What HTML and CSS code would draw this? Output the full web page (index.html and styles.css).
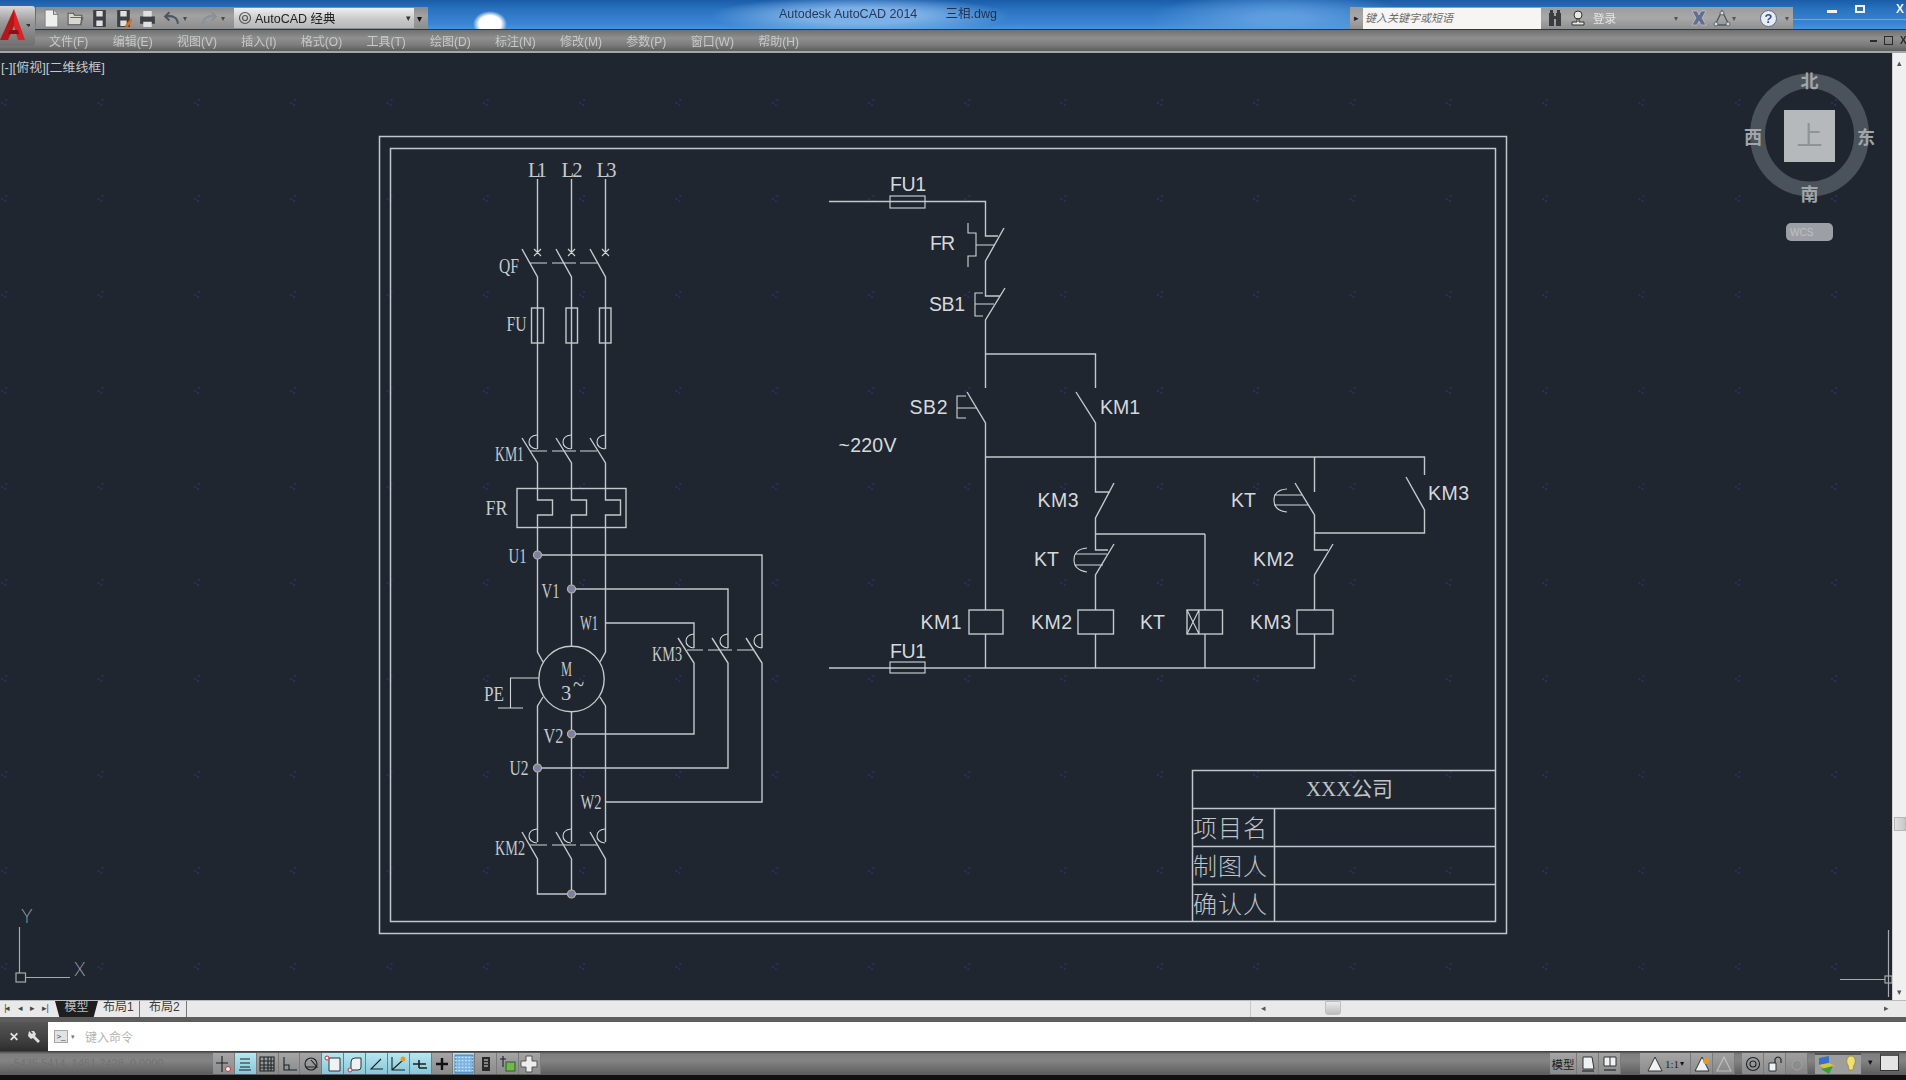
FILE: index.html
```html
<!DOCTYPE html>
<html lang="zh">
<head>
<meta charset="utf-8">
<title>Autodesk AutoCAD 2014 三相.dwg</title>
<link rel="stylesheet" href="styles.css">
</head>
<body>
<div class="app">
  <header class="titlebar">
    <div class="appbtn">
      <svg class="logo" viewBox="0 0 30 34" width="30" height="34">
        <path class="logo-l" d="M14 1L0 32H8L14 18Z"/>
        <path class="logo-r" d="M14 1L25 32H18L14 18Z"/>
        <path class="logo-b" d="M8 26H19L18 22H10Z"/>
        <path class="arrow-d" d="M26 16h5l-2.5 3z"/>
      </svg>
    </div>
    <div class="qat">
      <svg class="qi" viewBox="0 0 16 18"><path class="i-page" d="M2 1h8l4 4v12H2z"/><path class="i-fold" d="M10 1v4h4"/></svg>
      <svg class="qi" viewBox="0 0 16 18"><path class="i-page2" d="M1 15V4h5l1 2h7l-1 9z"/><path class="i-fold" d="M3 8h12l-2 7"/></svg>
      <svg class="qi" viewBox="0 0 16 18"><path class="i-disk" d="M2 1h12v16H2z"/><path class="i-label" d="M5 2h6v5H5zM5 11h6v5H5z"/></svg>
      <svg class="qi" viewBox="0 0 16 18"><path class="i-disk" d="M2 1h12v16H2z"/><path class="i-label" d="M5 2h6v5H5zM5 11h6v5H5z"/><path class="i-pencil" d="M9 16l6-7 2 2-6 7z"/></svg>
      <svg class="qi" viewBox="0 0 16 18"><path class="i-disk" d="M1 7h14v7H1z"/><path class="i-label" d="M4 2h8v5H4zM4 12h8v5H4z"/></svg>
      <svg class="qi" viewBox="0 0 16 18"><path class="i-undo" d="M14 14C14 8 9 6 3 7M6 3L2 7l4 4"/></svg>
      <span class="qa">▾</span>
      <svg class="qi qi-off" viewBox="0 0 16 18"><path class="i-redo" d="M2 14C2 8 7 6 13 7M10 3l4 4-4 4"/></svg>
      <span class="qa">▾</span>
      <div class="wsp">
        <svg class="gear" viewBox="0 0 16 16" width="16" height="16"><circle class="i-gear" cx="8" cy="8" r="5.5"/><circle class="i-gear" cx="8" cy="8" r="2.5"/></svg>
        <span class="wsp-t">AutoCAD 经典</span>
        <span class="wsp-a">▾</span>
      </div>
      <span class="qat-more">▾</span>
    </div>
    <div class="doc">
      <span class="doc-a">Autodesk AutoCAD 2014</span>
      <span class="doc-b">三相.dwg</span>
    </div>
    <div class="search">
      <span class="s-arrow">▸</span>
      <div class="s-input">键入关键字或短语</div>
      <svg class="s-ic" viewBox="0 0 16 18" width="16" height="18"><path class="i-bin" d="M2 4h5v13H2zM9 4h5v13H9zM3 1h3v3H3zM10 1h3v3h-3zM7 7h2v3H7z"/></svg>
      <svg class="s-ic s-user" viewBox="0 0 16 18" width="16" height="18"><circle class="i-user" cx="8" cy="6" r="4"/><path class="i-user" d="M7 10h2v3h5v3H2v-3h5z"/></svg>
      <span class="s-login">登录</span>
      <span class="s-a s-a1">▾</span>
      <svg class="s-ic s-x" viewBox="0 0 18 18" width="18" height="18"><path class="i-x" d="M2 2h5l2 4 2-4h5l-4 7 4 7h-5l-2-4-2 4H2l4-7z"/></svg>
      <svg class="s-ic s-tri" viewBox="0 0 18 18" width="18" height="18"><path class="i-tri" d="M9 2L16 16H2Z"/><circle class="i-tri2" cx="9" cy="4" r="2"/><circle class="i-tri2" cx="3" cy="15" r="2"/><circle class="i-tri2" cx="15" cy="15" r="2"/></svg>
      <span class="s-a s-a2">▾</span>
      <span class="s-help">?</span>
      <span class="s-a s-a3">▾</span>
    </div>
    <div class="winbtns">
      <span class="w-min"></span>
      <span class="w-max"></span>
      <span class="w-x">X</span>
    </div>
  </header>

  <nav class="menubar">
    <span class="mi">文件(F)</span>
    <span class="mi">编辑(E)</span>
    <span class="mi">视图(V)</span>
    <span class="mi">插入(I)</span>
    <span class="mi">格式(O)</span>
    <span class="mi">工具(T)</span>
    <span class="mi">绘图(D)</span>
    <span class="mi">标注(N)</span>
    <span class="mi">修改(M)</span>
    <span class="mi">参数(P)</span>
    <span class="mi">窗口(W)</span>
    <span class="mi">帮助(H)</span>
    <div class="mdi">
      <span class="m-min"></span>
      <span class="m-rest"></span>
      <span class="m-x">X</span>
    </div>
  </nav>

  <main class="workspace">
    <svg class="canvas" viewBox="0 53 1892 947" width="1892" height="947">
      <defs>
        <pattern id="grid" patternUnits="userSpaceOnUse" x="867" y="195" width="96.3" height="96">
          <rect class="speck" x="1" y="3" width="2" height="2"/>
          <rect class="speck" x="5" y="0" width="2" height="2"/>
          <rect class="speck" x="4" y="5" width="2" height="2"/>
        </pattern>
      </defs>
      <rect class="gridfill" x="0" y="53" width="1892" height="947"/>

      <text class="vp" x="1" y="72" textLength="104" lengthAdjust="spacingAndGlyphs">[-][俯视][二维线框]</text>

      <!-- sheet frames -->
      <rect class="frame" x="379.5" y="136.5" width="1127" height="797"/>
      <rect class="frame" x="390.5" y="148.5" width="1105" height="773"/>

      <!-- title block -->
      <path class="frame" d="M1192.5 922V770.5H1496M1192.5 808.5H1496M1192.5 846.5H1496M1192.5 884.5H1496M1274.5 808.5V922"/>
      <text class="cjk cjk-m" x="1306" y="796" textLength="87" lengthAdjust="spacingAndGlyphs">XXX公司</text>
      <text class="cjk" x="1193" y="837" textLength="74">项目名</text>
      <text class="cjk" x="1193" y="875" textLength="74">制图人</text>
      <text class="cjk" x="1193" y="913" textLength="74">确认人</text>

      <!-- motor circuit -->
      <path class="wire" d="M537.5 179V252M571.5 179V252M605.5 179V252"/>
      <path class="thin" d="M534 249l7 7M541 249l-7 7M568 249l7 7M575 249l-7 7M602 249l7 7M609 249l-7 7"/>
      <path class="wire" d="M522 249L537.5 277V449M556 249L571.5 277V449M590 249L605.5 277V449"/>
      <path class="thin" d="M530 263H547M552 263H576M580 263H597"/>
      <rect class="wire" x="531.5" y="308" width="12" height="35"/>
      <rect class="wire" x="566" y="308" width="11.5" height="35"/>
      <rect class="wire" x="599.5" y="308" width="11.5" height="35"/>

      <path class="thin" d="M537 435Q529 436 529 442Q529 448 537 449M571 435Q563 436 563 442Q563 448 571 449M605 435Q597 436 597 442Q597 448 605 449"/>
      <path class="thin" d="M530 451H547M552 451H576M580 451H597"/>
      <path class="wire" d="M522 438L537.5 463V500H552.5V515H537.5V652L543 662"/>
      <path class="wire" d="M556 438L571.5 463V500H586.5V515H571.5V646"/>
      <path class="wire" d="M590 438L605.5 463V500H620.5V515H605.5V652L600 662"/>
      <rect class="wire" x="517" y="488.5" width="109" height="39"/>

      <circle class="wire" cx="571.5" cy="679" r="32.7"/>
      <path class="wire" d="M537.5 555H762V648M571.5 589H728V648M605.5 623H694V648"/>
      <path class="thin" d="M694 634Q686 635 686 641Q686 647 694 648M728 634Q720 635 720 641Q720 647 728 648M762 634Q754 635 754 641Q754 647 762 648"/>
      <path class="thin" d="M687 650H703M708 650H732M737 650H754"/>
      <path class="wire" d="M678 638L694 663V734H571.5M712 638L728 663V768H537.5M746 638L762 663V802H605.5"/>
      <path class="thin" d="M538.5 678H510.5V708M498 708H523"/>
      <path class="wire" d="M543 697L537.5 706V842M571.5 712V842M600 697L605.5 706V842"/>
      <path class="thin" d="M537 829Q529 830 529 836Q529 842 537 843M571 829Q563 830 563 836Q563 842 571 843M605 829Q597 830 597 836Q597 842 605 843"/>
      <path class="thin" d="M530 845H547M552 845H576M580 845H597"/>
      <path class="wire" d="M522 832L537.5 859V894H605.5V859L590 832M556 832L571.5 859V894"/>
      <circle class="node" cx="537.5" cy="555" r="4"/>
      <circle class="node" cx="571.5" cy="589" r="4"/>
      <circle class="node" cx="571.5" cy="734" r="4"/>
      <circle class="node" cx="537.5" cy="768" r="4"/>
      <circle class="node" cx="571.5" cy="894" r="4"/>

      <text class="ser" x="528" y="177" textLength="19">L1</text>
      <text class="ser" x="561.5" y="177" textLength="21">L2</text>
      <text class="ser" x="596.5" y="177" textLength="20">L3</text>
      <text class="ser" x="499" y="273" textLength="20" lengthAdjust="spacingAndGlyphs">QF</text>
      <text class="ser" x="506.5" y="331" textLength="20" lengthAdjust="spacingAndGlyphs">FU</text>
      <text class="ser" x="495" y="461" textLength="29" lengthAdjust="spacingAndGlyphs">KM1</text>
      <text class="ser" x="485.5" y="515" textLength="22" lengthAdjust="spacingAndGlyphs">FR</text>
      <text class="ser" x="508.5" y="563" textLength="18" lengthAdjust="spacingAndGlyphs">U1</text>
      <text class="ser" x="541.5" y="598" textLength="18" lengthAdjust="spacingAndGlyphs">V1</text>
      <text class="ser" x="580" y="630" textLength="18" lengthAdjust="spacingAndGlyphs">W1</text>
      <text class="ser" x="652" y="661" textLength="30" lengthAdjust="spacingAndGlyphs">KM3</text>
      <text class="ser" x="561" y="676" textLength="11" lengthAdjust="spacingAndGlyphs">M</text>
      <text class="ser" x="561" y="700">3</text>
      <text class="ser" x="573" y="691">~</text>
      <text class="ser" x="484" y="701" textLength="20" lengthAdjust="spacingAndGlyphs">PE</text>
      <text class="ser" x="543.5" y="743" textLength="20" lengthAdjust="spacingAndGlyphs">V2</text>
      <text class="ser" x="509.5" y="775" textLength="19" lengthAdjust="spacingAndGlyphs">U2</text>
      <text class="ser" x="580.5" y="809" textLength="21" lengthAdjust="spacingAndGlyphs">W2</text>
      <text class="ser" x="495" y="855" textLength="30" lengthAdjust="spacingAndGlyphs">KM2</text>

      <!-- control circuit -->
      <path class="wire" d="M829 201.5H985.5V236H998M1004 228L985.5 261V296H1000M1005 288L985.5 320V388"/>
      <rect class="thin" x="890" y="196" width="35" height="12"/>
      <path class="thin" d="M968 223V233H976V256H968V267M976 245H995M983 293H975V316H983M975 304H994"/>
      <path class="wire" d="M985.5 354H1095.5V388"/>
      <path class="wire" d="M967 392L985.5 423V668M1076 392L1095.5 423V492H1110M1114 483L1095.5 518V550H1108M1114 544L1095.5 575V610"/>
      <path class="thin" d="M966 396H957V418H966M957 408H977"/>
      <path class="wire" d="M985.5 457H1424.5V475M1095.5 634V668M1205 534H1095.5M1205 534V610M1205 634V668"/>
      <path class="thin" d="M1075 554H1107M1075 565H1103M1087 548Q1074 549 1074 560Q1074 570 1087 572"/>
      <path class="wire" d="M1314.5 457V492M1295 483L1314.5 515V550H1328M1333 544L1314.5 575V610M1314.5 634V668H829M1314.5 533H1424.5V510L1406 477"/>
      <path class="thin" d="M1274 495H1302M1274 505H1308M1287 489Q1274 490 1274 500Q1274 511 1287 512"/>
      <rect class="wire bgfill" x="969" y="610" width="34" height="24"/>
      <rect class="wire bgfill" x="1078" y="610" width="35.5" height="24"/>
      <rect class="wire bgfill" x="1187" y="610" width="35.5" height="24"/>
      <path class="thin" d="M1199 610V634M1187 610L1199 634M1199 610L1187 634"/>
      <rect class="wire bgfill" x="1297" y="610" width="36" height="24"/>
      <rect class="thin" x="890" y="662" width="35" height="11"/>

      <text class="san" x="890" y="191" textLength="36">FU1</text>
      <text class="san" x="930" y="250" textLength="25">FR</text>
      <text class="san" x="929" y="311" textLength="36">SB1</text>
      <text class="san" x="909.5" y="414" textLength="38">SB2</text>
      <text class="san" x="1100" y="414" textLength="40">KM1</text>
      <text class="san" x="838.5" y="452" textLength="58">~220V</text>
      <text class="san" x="1037.5" y="507" textLength="41">KM3</text>
      <text class="san" x="1034" y="566" textLength="25">KT</text>
      <text class="san" x="920.5" y="629" textLength="41">KM1</text>
      <text class="san" x="1031" y="629" textLength="41">KM2</text>
      <text class="san" x="1140" y="629" textLength="25">KT</text>
      <text class="san" x="890" y="658" textLength="36">FU1</text>
      <text class="san" x="1231" y="507" textLength="25">KT</text>
      <text class="san" x="1428" y="500" textLength="41">KM3</text>
      <text class="san" x="1253" y="566" textLength="41">KM2</text>
      <text class="san" x="1250" y="629" textLength="41">KM3</text>

      <!-- UCS icon -->
      <path class="ucs" d="M19.5 927V973M25 977.5H70"/>
      <rect class="ucs" x="16" y="973" width="9.5" height="9"/>
      <text class="ucs-t" x="21" y="923">Y</text>
      <text class="ucs-t" x="74" y="976">X</text>

      <!-- crosshair -->
      <path class="ucs" d="M1840 979.5H1885M1888.5 930V997"/>
      <rect class="ucs" x="1885" y="976" width="7" height="7"/>

      <!-- viewcube -->
      <ellipse class="vc-ring" cx="1809.5" cy="135" rx="52" ry="54"/>
      <rect class="vc-face" x="1784" y="110" width="51" height="52"/>
      <text class="vc-top" x="1809.5" y="145">上</text>
      <text class="vc-dir" x="1809.5" y="88">北</text>
      <text class="vc-dir" x="1809.5" y="201">南</text>
      <text class="vc-dir" x="1753" y="144">西</text>
      <text class="vc-dir" x="1866" y="144">东</text>
      <rect class="vc-wcs" x="1786" y="223" width="47" height="18" rx="5"/>
      <text class="vc-wcs-t" x="1790" y="236">WCS</text>
    </svg>
    <aside class="vscroll">
      <span class="sb-up">▴</span>
      <span class="sb-thumb"></span>
      <span class="sb-down">▾</span>
    </aside>
  </main>

  <section class="tabsrow">
    <div class="tabnav"><span>|◂</span><span>◂</span><span>▸</span><span>▸|</span></div>
    <span class="tab tab-on">模型</span>
    <span class="tab tab-1">布局1</span>
    <span class="tab tab-2">布局2</span>
    <div class="hscroll">
      <span class="hs-l">◂</span>
      <span class="hs-thumb"></span>
      <span class="hs-r">▸</span>
    </div>
  </section>

  <section class="cmd">
    <div class="cmd-side"><span class="cmd-x">✕</span><svg viewBox="0 0 14 14" width="14" height="14"><path class="i-wrench" d="M2 1l3 3 1-1-2-2h3l2 3-1 2 5 5-2 2-5-5-2 1-3-3z"/></svg></div>
    <div class="cmd-in">
      <span class="cmd-ic">&gt;_</span>
      <span class="cmd-a">▾</span>
      <span class="cmd-ph">键入命令</span>
    </div>
  </section>

  <footer class="status">
    <div class="coords">-5435.5414, 1461.2428, 0.0000</div>
    <div class="st-group">
      <span class="st"><svg viewBox="0 0 18 18"><path class="ib" d="M8 1V17M2 8H14"/><circle class="ir" cx="14" cy="14" r="2.5"/></svg></span>
      <span class="st on"><svg viewBox="0 0 18 18"><path class="ib" d="M4 4H14M4 8H14M4 12H14M3 15H15"/></svg></span>
      <span class="st"><svg viewBox="0 0 18 18"><path class="ib" d="M2 2H16V16H2ZM2 6H16M2 10H16M2 13H16M6 2V16M10 2V16M13 2V16"/></svg></span>
      <span class="st"><svg viewBox="0 0 18 18"><path class="ib" d="M4 2V15H17M4 10H9V15"/></svg></span>
      <span class="st"><svg viewBox="0 0 18 18"><circle class="ib" cx="9" cy="9" r="6"/><path class="ib" d="M4 12H15L9 5"/></svg></span>
      <span class="st on"><svg viewBox="0 0 18 18"><path class="iw" d="M5 3H16V16H5Z"/><circle class="ir" cx="3" cy="3" r="2"/></svg></span>
      <span class="st on"><svg viewBox="0 0 18 18"><path class="iw" d="M5 15V7Q5 3 9 3H15V12Q15 15 12 15Z"/><circle class="ir" cx="4" cy="15" r="2"/></svg></span>
      <span class="st on"><svg viewBox="0 0 18 18"><path class="ib" d="M14 4L4 14H16M9 14"/></svg></span>
      <span class="st on"><svg viewBox="0 0 18 18"><path class="ib" d="M3 2V15H16M3 15L14 5"/><circle class="io" cx="14" cy="4" r="2.5"/></svg></span>
      <span class="st on"><svg viewBox="0 0 18 18"><path class="ib2" d="M2 9H15M8 5V13M8 13H16"/></svg></span>
      <span class="st"><svg viewBox="0 0 18 18"><path class="ib3" d="M9 3V15M3 9H15"/></svg></span>
      <span class="st on st-hatch"><svg viewBox="0 0 18 18"><rect class="ih" x="1" y="1" width="16" height="16"/><path class="ih2" d="M1 3H17M1 6H17M1 9H17M1 12H17M1 15H17"/></svg></span>
      <span class="st"><svg viewBox="0 0 18 18"><path class="iq" d="M5 2H13V16H5Z"/><path class="iw2" d="M7 5H11M7 8H11M7 11H11"/></svg></span>
      <span class="st"><svg viewBox="0 0 18 18"><path class="ib" d="M4 1V12M1 4H7"/><rect class="ig" x="7" y="7" width="9" height="9"/></svg></span>
      <span class="st"><svg viewBox="0 0 18 18"><path class="ip" d="M6 1H12V6H17V12H12V17H6V12H1V6H6Z"/></svg></span>
    </div>
    <div class="st-right">
      <span class="st st-model">模型</span>
      <span class="st st-r"><svg viewBox="0 0 18 18"><path class="iw" d="M4 2H13L15 14H4Z"/><path class="ib" d="M3 16H15"/></svg></span>
      <span class="st st-r"><svg viewBox="0 0 18 18"><path class="iw" d="M3 2H15V11H3ZM9 2V11"/><path class="ib" d="M3 15H15"/></svg></span>
      <span class="st st-anno"><svg viewBox="0 0 18 18"><path class="iw" d="M9 2L16 16H2Z"/></svg><span class="anno-t">1:1</span><span class="anno-a">▾</span></span>
      <span class="st st-r"><svg viewBox="0 0 18 18"><path class="iw" d="M9 2L16 16H2Z"/><circle class="io" cx="13" cy="6" r="3"/></svg></span>
      <span class="st st-r st-dim"><svg viewBox="0 0 18 18"><path class="ic" d="M9 2L16 16H2Z"/></svg></span>
      <span class="st st-r st-gap"><svg viewBox="0 0 18 18"><circle class="ib" cx="9" cy="9" r="6.5"/><circle class="ib" cx="9" cy="9" r="3"/></svg></span>
      <span class="st st-r"><svg viewBox="0 0 18 18"><path class="iw" d="M3 8H10V16H3Z"/><path class="ib" d="M9 8V4Q12 0 15 4V8"/></svg></span>
      <span class="st st-r st-dim"><svg viewBox="0 0 18 18"><circle class="ic2" cx="9" cy="10" r="5"/></svg></span>
      <span class="st-box">
        <svg viewBox="0 0 22 20" width="22" height="20"><path class="iso-b" d="M2 3L12 1V8L2 10Z"/><path class="iso-y" d="M2 10L12 8L18 11L8 14Z"/><path class="iso-g" d="M4 14L16 11L12 19Z"/></svg>
        <svg viewBox="0 0 16 20" width="16" height="20"><path class="bulb" d="M8 1C3 1 3 8 5 10L6 15H10L11 10C13 8 13 1 8 1Z"/></svg>
      </span>
      <span class="st-arr">▾</span>
      <span class="st-win"></span>
    </div>
  </footer>
  <div class="bottomline"></div>
</div>
</body>
</html>
```

FILE: styles.css
```css
* { box-sizing: border-box; }
html, body { margin: 0; height: 100%; background: #1f2630; overflow: hidden; }
body { font-family: "Liberation Sans", "Noto Sans CJK SC", sans-serif; }
.app { width: 1906px; height: 1080px; display: flex; flex-direction: column; filter: blur(0.6px); position: relative; overflow: hidden; }

/* title bar */
.titlebar {
  height: 30px; display: flex; align-items: flex-start; position: relative; flex: none;
  border-bottom: 1px solid #33373b;
  background:
    radial-gradient(ellipse 17px 13px at 490px 24px, #fff 65%, rgba(255,255,255,0) 100%),
    radial-gradient(ellipse 150px 20px at 860px 16px, #7db0e6 40%, rgba(125,176,230,0) 100%),
    radial-gradient(ellipse 130px 30px at 1280px 20px, #5e9ddf 20%, rgba(94,157,223,0) 100%),
    linear-gradient(#1a5ca8 0, #2a72bf 9px, #3a86d4 24px, #4a92dc 29px);
}
.appbtn {
  position: absolute; left: 0; top: 6px; width: 35px; height: 40px; z-index: 3;
  background: linear-gradient(#d8d8d8, #9a9a9a 40%, #6f6f6f);
  border-radius: 0 3px 3px 0;
}
.logo { position: absolute; left: 0; top: 2px; }
.logo-l { fill: #b3161b; }
.logo-r { fill: #dc2127; }
.logo-b { fill: #8e1014; }
.arrow-d { fill: #333; }
.qat {
  margin: 7px 0 0 36px; width: 392px; height: 22px; display: flex; align-items: center; flex: none;
  background: linear-gradient(#8a8a8a, #a2a2a2 40%, #8c8c8c);
  padding-left: 7px;
}
.qi { width: 17px; height: 19px; margin-right: 7px; flex: none; }
.i-page { fill: #eef0ee; stroke: #777; stroke-width: .7; }
.i-page2 { fill: #d8d8d0; stroke: #555; stroke-width: 1; }
.i-fold { fill: none; stroke: #666; stroke-width: 1; }
.i-disk { fill: #3c3f44; }
.i-label { fill: #e0e0e0; }
.i-pencil { fill: #d96f1c; }
.i-undo { fill: none; stroke: #4d5660; stroke-width: 2; }
.i-redo { fill: none; stroke: #8a9098; stroke-width: 2; }
.qa { font-size: 8px; color: #4a4a4a; margin: 0 5px 0 -4px; width: 8px; }
.qi-off { margin-left: 5px; }
.wsp {
  width: 180px; height: 20px; margin-left: 0; display: flex; align-items: center;
  background: linear-gradient(#efefef, #c6c6c6 60%, #b9b9b9);
  padding-left: 3px; flex: none;
}
.gear { flex: none; }
.i-gear { fill: none; stroke: #555; stroke-width: 1.2; }
.wsp-t { font-size: 12.5px; color: #222; margin-left: 2px; flex: 1; white-space: nowrap; padding-bottom: 1px; }
.wsp-a { font-size: 9px; color: #333; margin-right: 3px; }
.qat-more { font-size: 10px; color: #111; margin-left: 3px; }
.doc { margin: 6px 0 0 351px; width: 218px; display: flex; font-size: 12.5px; white-space: nowrap; flex: none; line-height: 17px; }
.doc-a { color: #25395a; width: 167px; }
.doc-b { color: #1e3050; }
.search {
  margin: 7px 0 0 353px; width: 443px; height: 22px; display: flex; align-items: center; flex: none;
  background: linear-gradient(#9c9c9c, #a8a8a8 50%, #8f8f8f);
  position: relative;
}
.s-arrow { width: 13px; font-size: 9px; color: #222; text-align: center; flex: none; }
.s-input {
  width: 178px; height: 21px; background: #f7f5f3; color: #6a6a6a; font-size: 11px; font-style: italic;
  line-height: 21px; padding-left: 2px; flex: none;
}
.s-ic { flex: none; }
.i-bin { fill: #3a3d40; }
.i-user { fill: #e8e8e0; stroke: #333; stroke-width: 1; }
.s-ic:nth-of-type(1) { margin-left: 6px; }
.s-user { margin-left: 7px; }
.s-login { color: #e6e6e6; font-size: 11.5px; margin-left: 7px; width: 81px; flex: none; }
.s-a { font-size: 8px; color: #555; flex: none; }
.s-x { margin-left: 12px; }
.i-x { fill: #5f6f93; stroke: #ddd; stroke-width: .5; }
.s-tri { margin-left: 5px; }
.i-tri { fill: none; stroke: #4f5a66; stroke-width: 1.4; }
.i-tri2 { fill: #d8d8d8; stroke: #4f5a66; stroke-width: .8; }
.s-a2 { margin-left: 1px; }
.s-help {
  width: 17px; height: 17px; border-radius: 50%; background: #e8ecf4; border: 1px solid #5a6a8c; color: #34508a;
  font-size: 13px; line-height: 15px; text-align: center; font-weight: bold; margin-left: 24px; flex: none;
}
.s-a3 { margin-left: 8px; }
.winbtns { flex: 1; display: flex; align-items: center; height: 20px; border-bottom: 1px solid #6ea6df; position: relative; margin-top: 0; padding-left: 34px; }
.w-min { width: 10px; height: 3px; background: #eef2f6; margin-top: 4px; }
.w-max { width: 10px; height: 8px; border: 2px solid #eef2f6; margin-left: 18px; margin-top: -2px; background: #3a70a8; }
.w-x { color: #f0f4f8; font-weight: bold; font-size: 12px; margin-left: 31px; margin-top: -2px; }

/* menu */
.menubar {
  height: 23px; flex: none; display: flex; align-items: center; padding-left: 49px; gap: 24.3px;
  background: linear-gradient(#6f7071 0, #8f8f8f 35%, #7c7c7c 65%, #5c5c5c 92%, #a6a6a6 93%, #a6a6a6 100%);
  position: relative;
}
.mi { font-size: 12px; color: #c7c8c8; white-space: nowrap; padding-bottom: 3px; }
.mdi { margin-left: auto; display: flex; align-items: center; gap: 7px; padding-bottom: 2px; width: 36px; flex: none; }
.m-min { width: 7px; height: 2px; background: #2a2a2a; flex: none; }
.m-rest { width: 9px; height: 9px; border: 1px solid #2a2a2a; flex: none; }
.m-x { font-size: 10px; font-weight: bold; color: #2a2a2a; flex: none; }

/* workspace */
.workspace { height: 947px; display: flex; flex: none; background: #1f2630; }
.canvas { display: block; flex: none; }
.gridfill { fill: url(#grid); }
.speck { fill: #27305a; }
.vp { font: 12px "Liberation Sans", "Noto Sans CJK SC", sans-serif; fill: #c6c9cc; }
.frame { fill: none; stroke: #c2c6ca; stroke-width: 1.5; }
.wire { fill: none; stroke: #c4c8cb; stroke-width: 1.4; }
.bgfill { fill: #1f2630; }
.thin { fill: none; stroke: #d2d5d8; stroke-width: 1.1; }
.node { fill: #7c80a8; stroke: #b8b690; stroke-width: 1.2; }
.ser { font: 20.5px "Liberation Serif", serif; fill: #c6cacd; }
.san { font: 19.5px "Liberation Sans", sans-serif; fill: #d6d9dc; }
.cjk { font: 24px "Noto Sans CJK SC", sans-serif; font-weight: 300; fill: #c0c4c8; }
.cjk-m { font: 21px "Liberation Serif", "Noto Sans CJK SC", serif; }
.ucs { fill: none; stroke: #a6aaae; stroke-width: 1.2; }
.ucs-t { font: 200 18px "Inter", sans-serif; fill: #a0a4a8; }
.vc-ring { fill: none; stroke: #4a525b; stroke-width: 15; }
.vc-face { fill: #b5b9bb; }
.vc-top { font: 26px "Noto Sans CJK SC", sans-serif; fill: #8e9396; text-anchor: middle; }
.vc-dir { font: bold 18px "Noto Sans CJK SC", sans-serif; fill: #a2a6a9; text-anchor: middle; }
.vc-wcs { fill: #9ca0a6; }
.vc-wcs-t { font: 10px "Liberation Sans", sans-serif; fill: #bcc0c4; }

.vscroll { width: 14px; flex: none; background: #f0f0f0; border-left: 1px solid #d0d0d0; display: flex; flex-direction: column; align-items: center; }
.sb-up { font-size: 9px; color: #555; height: 14px; line-height: 20px; flex: none; }
.sb-thumb { width: 12px; height: 14px; margin-top: 750px; background: linear-gradient(90deg,#e0e0e0,#c8c8c8); border: 1px solid #b8b8b8; flex: none; }
.sb-down { font-size: 9px; color: #555; margin-top: auto; padding-bottom: 3px; }

/* tabs */
.tabsrow { height: 17px; flex: none; display: flex; align-items: center; background: #e9e9e9; border-top: 1px solid #bbb; position: relative; }
.tabnav { width: 55px; display: flex; justify-content: space-around; font-size: 9px; color: #444; flex: none; letter-spacing: -1px; padding-right: 3px; padding-bottom: 2px; }
.tab { font-size: 12px; white-space: nowrap; color: #3a3a3a; flex: none; height: 16px; line-height: 13px; }
.tab-on { width: 43px; background: #1e1e1e; color: #c0c0c0; text-align: center; clip-path: polygon(0 0, 100% 0, 90% 100%, 10% 100%); }
.tab-1 { margin-left: 5px; width: 37px; border-right: 1px solid #777; }
.tab-2 { padding-left: 9px; width: 47px; border-right: 1px solid #777; }
.hscroll { margin-left: auto; width: 656px; height: 16px; display: flex; align-items: center; position: relative; border-left: 1px solid #c8c8c8; flex: none; }
.hs-l { font-size: 9px; color: #555; margin-left: 10px; flex: none; padding-bottom: 2px; }
.hs-thumb { width: 16px; height: 14px; margin-left: 59px; background: linear-gradient(#eaeaea,#bdbdbd); border: 1px solid #c0c0c0; border-radius: 0 0 3px 3px; flex: none; align-self: flex-start; }
.hs-r { font-size: 9px; color: #555; margin-left: auto; margin-right: 17px; padding-bottom: 2px; }

/* command line */
.cmd { height: 34px; flex: none; display: flex; border-top: 5px solid #5d5d5d; }
.cmd-side { width: 48px; background: linear-gradient(#555, #3c3c3c 70%, #2c2c2c); display: flex; align-items: center; padding-left: 9px; gap: 8px; flex: none; }
.cmd-x { color: #e4e4e4; font-size: 12px; font-weight: bold; }
.i-wrench { fill: #e0e0e0; }
.cmd-in { flex: 1; background: #fff; display: flex; align-items: center; padding-left: 6px; }
.cmd-ic { width: 14px; height: 13px; background: #e2e2e2; border: 1px solid #a8a8a8; font-size: 8px; color: #333; line-height: 11px; text-align: center; flex: none; }
.cmd-a { font-size: 7px; color: #777; margin-left: 3px; width: 14px; }
.cmd-ph { font-size: 12px; color: #b4b4b4; }

/* status */
.status { height: 24px; flex: none; display: flex; align-items: stretch; background: linear-gradient(#3a3a3a 0, #7e7e7e 3px, #848484 40%, #5e5e5e 95%); padding-top: 2px; }
.coords { width: 213px; font-size: 11px; color: #727272; padding: 4px 0 0 10px; white-space: nowrap; overflow: hidden; flex: none; }
.st-group { width: 328px; display: flex; flex: none; }
.st { flex: 1; height: 21px; display: flex; align-items: center; justify-content: center; background: linear-gradient(#a5a5a5, #8b8b8b); border-right: 1px solid #7a7a7a; }
.st svg { width: 18px; height: 18px; flex: none; }
.st.on { background: linear-gradient(#b8e6f0, #86c8d8); }
.st-hatch svg { width: 20px; height: 20px; }
.ib { fill: none; stroke: #1c2226; stroke-width: 1.1; }
.ib2 { fill: none; stroke: #1c2226; stroke-width: 1.6; }
.ib3 { fill: none; stroke: #111; stroke-width: 2.4; }
.ir { fill: #f3f3f3; stroke: #c33; stroke-width: 1; }
.io { fill: #e89a20; }
.iw { fill: #eef2f4; stroke: #333; stroke-width: 1; }
.ih { fill: #7cb4e4; stroke: #4d7fb0; }
.ih2 { fill: none; stroke: #d6e8f6; stroke-width: 1; stroke-dasharray: 1.5 1.5; }
.iq { fill: #2a2a2a; }
.iw2 { fill: none; stroke: #ddd; stroke-width: 1; }
.ig { fill: #6fb84a; stroke: #2f5a2a; stroke-width: 1; }
.ip { fill: #ededed; stroke: #555; stroke-width: 1; }
.ic { fill: none; stroke: #ccc; stroke-width: 1.2; }
.ic2 { fill: #8d9290; stroke: #aaa; stroke-width: 1; }
.st-right { margin-left: 1009px; width: 356px; display: flex; flex: none; align-items: flex-start; }
.st-model { flex: none; width: 27px; font-size: 11.5px; color: #1c1c1c; }
.st-r { flex: none; width: 22px; }
.st-gap { margin-left: 7px; }
.st-anno { flex: none; width: 51px; margin-left: 19px; gap: 1px; }
.anno-t { font: 11px "Liberation Serif", serif; color: #222; }
.anno-a { font-size: 8px; color: #111; }
.st-dim { opacity: .85; }
.st-box { width: 46px; height: 21px; margin-left: 7px; display: flex; justify-content: space-around; background: #9e9e9e; border-top: 2px solid #555; flex: none; }
.iso-b { fill: #3a70c8; }
.iso-y { fill: #d8c838; }
.iso-g { fill: #3e9a3e; }
.bulb { fill: #f0e070; stroke: #8a8038; stroke-width: .7; }
.st-arr { width: 19px; font-size: 9px; color: #111; text-align: center; padding-top: 4px; flex: none; }
.st-win { width: 19px; height: 18px; background: #e4e4e4; border: 1px solid #333; border-top: 3px solid #555; flex: none; }
.bottomline { flex: none; height: 5px; background: #111; }
```
